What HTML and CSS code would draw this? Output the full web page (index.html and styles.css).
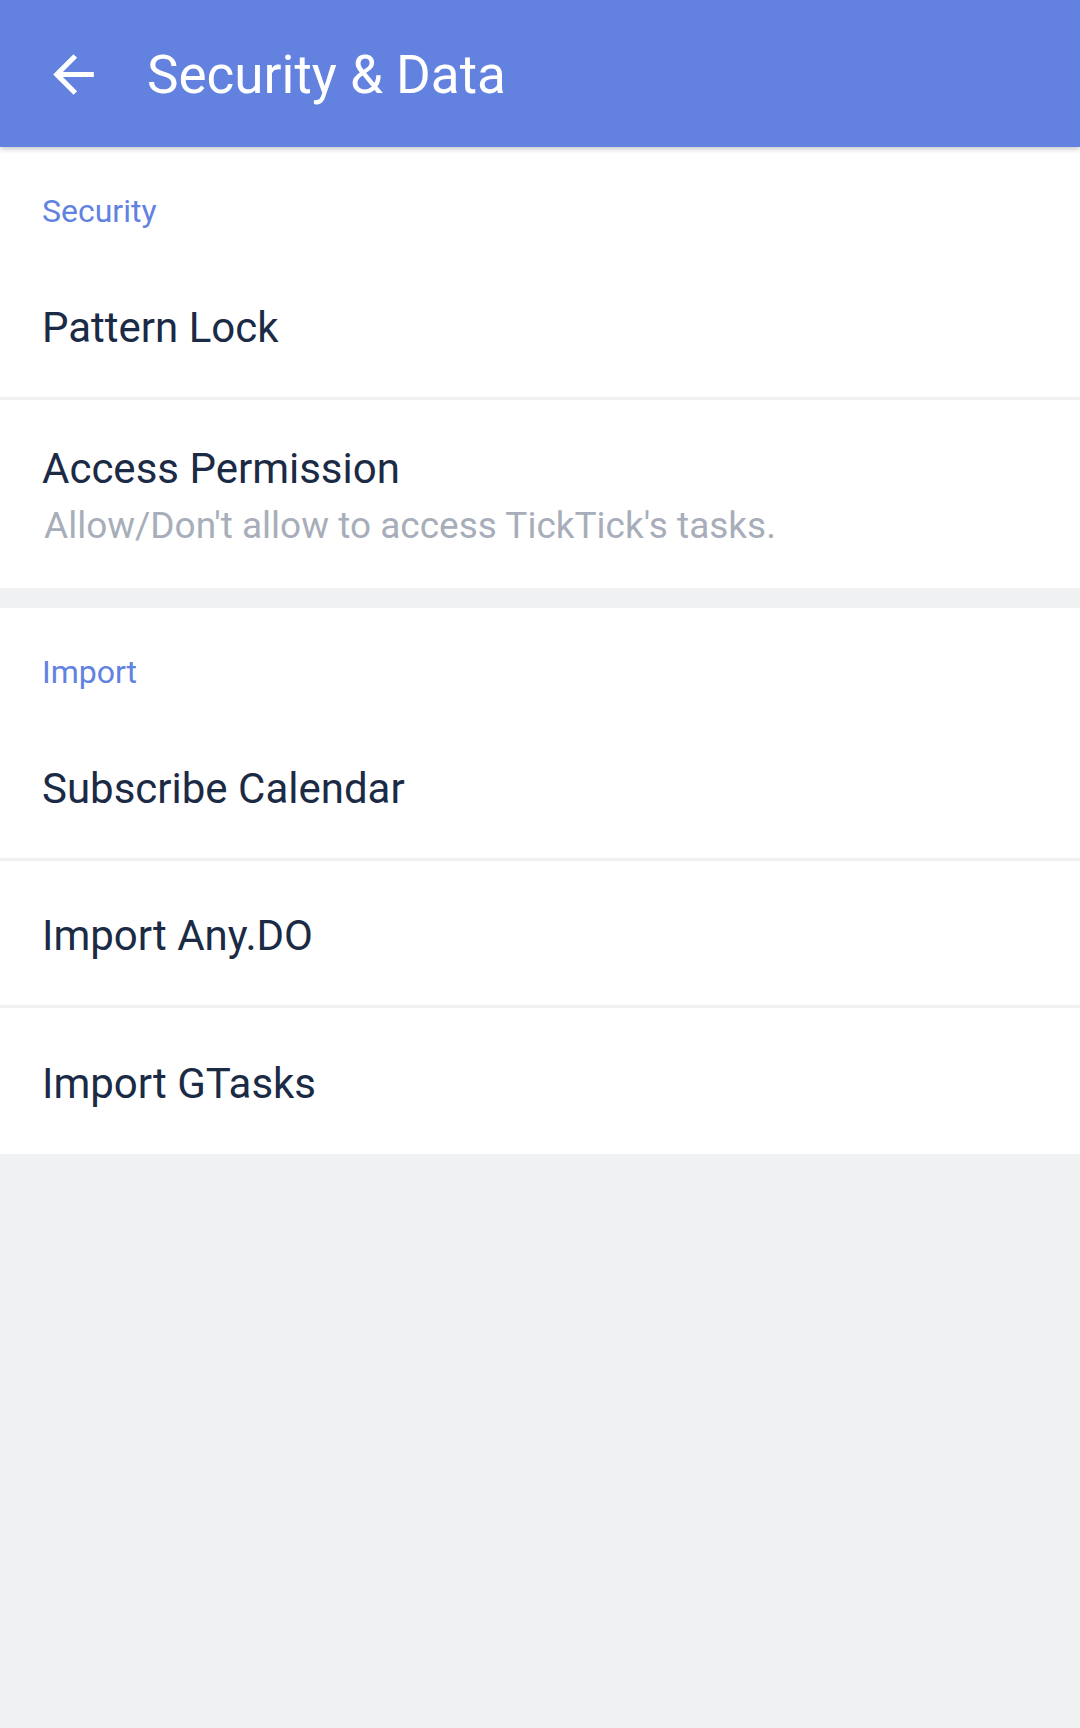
FILE: index.html
```html
<!DOCTYPE html>
<html lang="en">
<head>
<meta charset="utf-8">
<title>Security &amp; Data</title>
<link rel="stylesheet" href="styles.css">
</head>
<body>
<header class="appbar">
  <div class="back">
    <svg viewBox="0 0 24 24" width="61" height="61"><path fill="#ffffff" d="M20 11H7.83l5.59-5.59L12 4l-8 8 8 8 1.41-1.41L7.83 13H20v-2z"/></svg>
  </div>
  <h1 class="title">Security &amp; Data</h1>
</header>
<main>
  <section class="group">
    <div class="group-title">Security</div>
    <div class="row"><span class="row-text">Pattern Lock</span></div>
    <div class="row row-tall">
      <div class="row-text">Access Permission</div>
      <div class="row-sub">Allow/Don't allow to access TickTick's tasks.</div>
    </div>
  </section>
  <section class="group">
    <div class="group-title">Import</div>
    <div class="row"><span class="row-text">Subscribe Calendar</span></div>
    <div class="row"><span class="row-text">Import Any.DO</span></div>
    <div class="row row-last"><span class="row-text">Import GTasks</span></div>
  </section>
</main>
</body>
</html>
```

FILE: styles.css
```css
html, body {
  margin: 0;
  padding: 0;
}
body {
  width: 1080px;
  min-height: 1728px;
  background: #f0f1f3;
  font-family: Roboto, "Noto Sans", sans-serif;
  color: #1b2a45;
}
.appbar {
  position: relative;
  z-index: 2;
  height: 147px;
  background: #6381df;
  display: flex;
  align-items: center;
  box-shadow: 0 2px 5px rgba(0, 0, 0, 0.22);
}
.back {
  width: 61px;
  height: 61px;
  margin-left: 43px;
  margin-top: 2px;
  display: flex;
}
.title {
  margin: 0 0 0 43px;
  padding-top: 4px;
  font-size: 53px;
  line-height: 53px;
  font-weight: 400;
  color: #ffffff;
}
.group {
  background: #ffffff;
  margin-bottom: 20px;
}
.group-title {
  height: 106px;
  box-sizing: border-box;
  padding: 48px 0 0 42px;
  font-size: 32px;
  line-height: 32px;
  color: #6182e0;
}
.row {
  height: 147px;
  box-sizing: border-box;
  padding: 6px 0 0 42px;
  display: flex;
  align-items: center;
  border-bottom: 3px solid #f0f1f3;
}
.row-last {
  border-bottom: none;
  height: 146px;
}
.row-text {
  font-size: 42px;
  line-height: 42px;
  color: #1b2a45;
}
.row-tall {
  height: 188px;
  display: block;
  padding: 48px 0 0 42px;
  border-bottom: none;
}
.row-sub {
  margin-top: 17px;
  font-size: 37px;
  line-height: 37px;
  color: #a7aeb9;
  padding-left: 2px;
}
```
